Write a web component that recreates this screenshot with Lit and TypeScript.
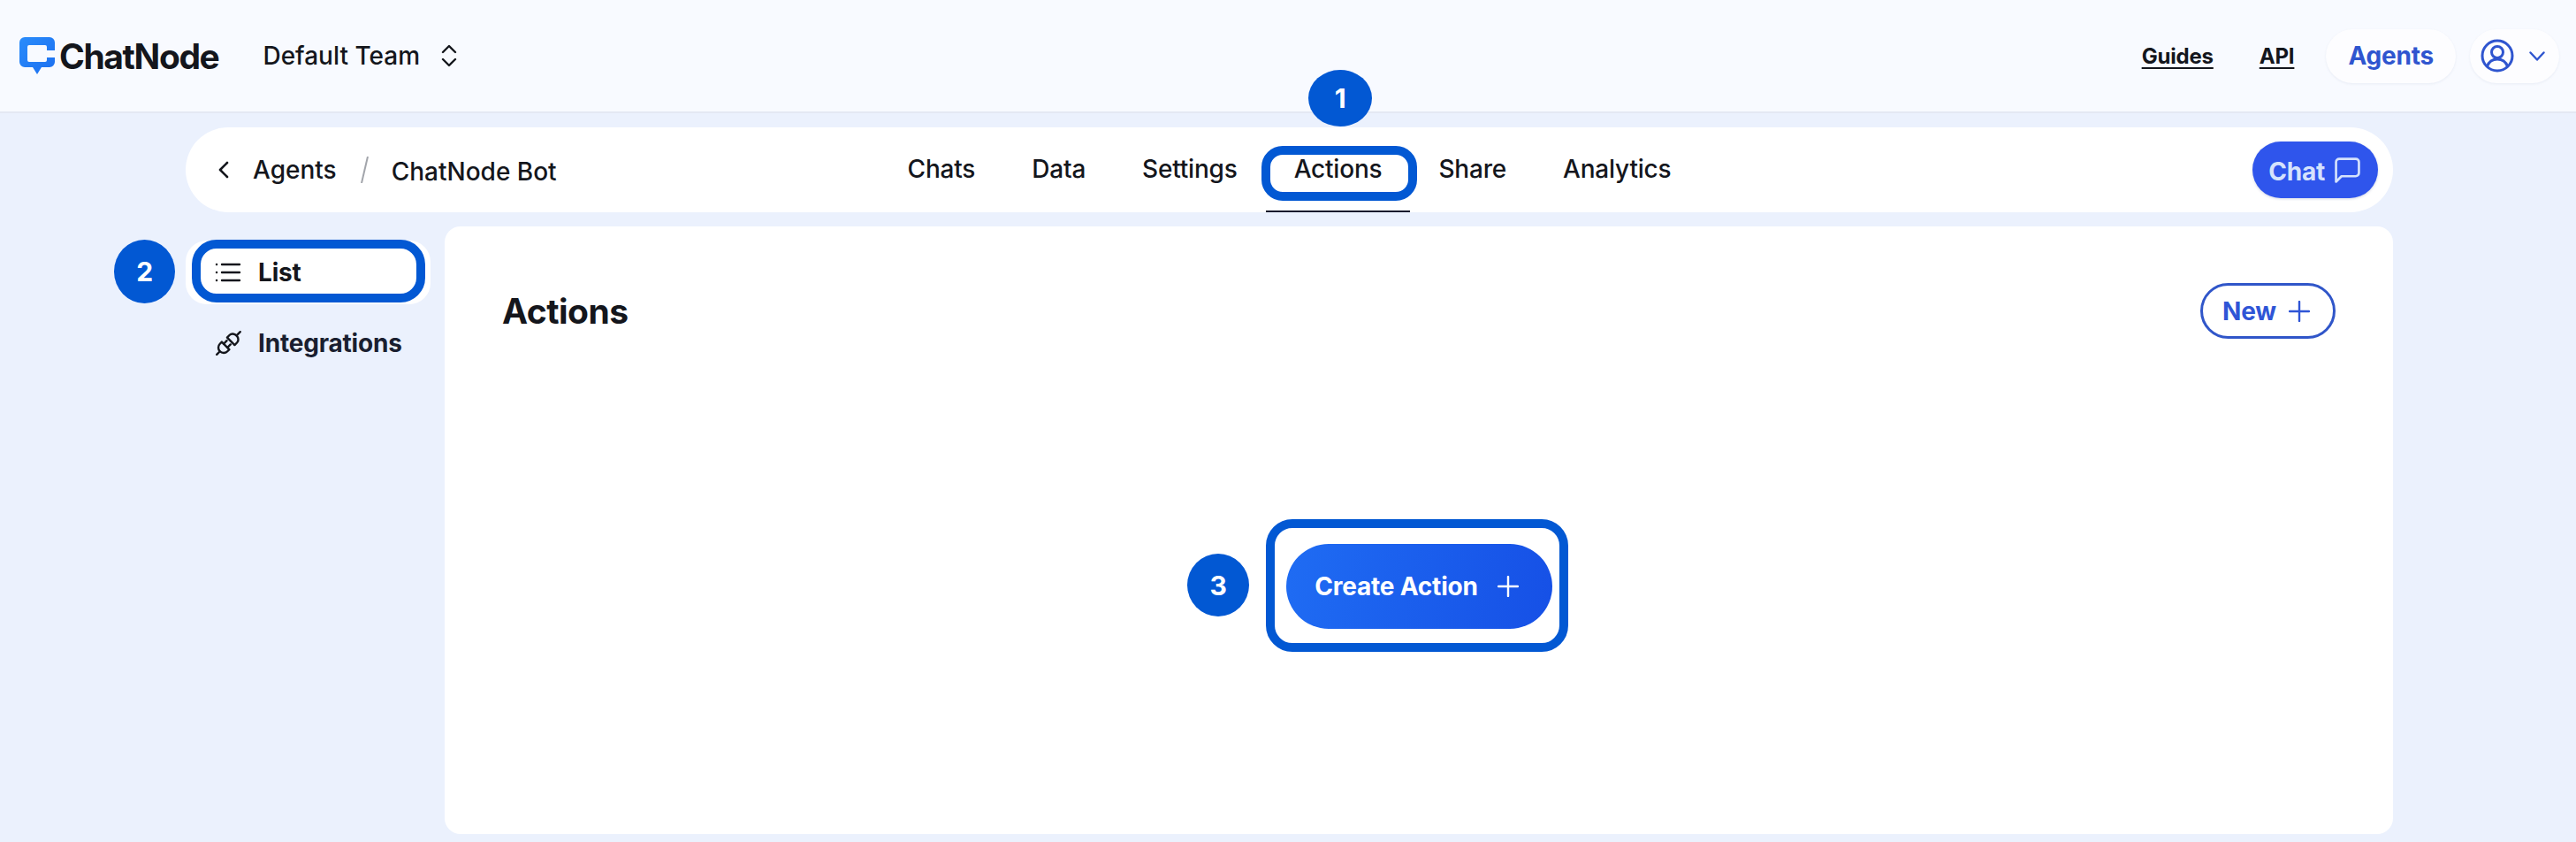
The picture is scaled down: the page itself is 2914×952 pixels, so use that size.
import { LitElement, html, css, svg } from "lit";
import { customElement } from "lit/decorators.js";

const TABS = ["Chats", "Data", "Settings", "Actions", "Share", "Analytics"];

const plus = (size: number, width: number) => html`
  <svg width=${size} height=${size} viewBox="0 0 24 24" fill="none" stroke="currentColor" stroke-width=${width} stroke-linecap="round">
    <path d="M12 1v22M1 12h22" />
  </svg>
`;

const logo = svg`
  <svg class="logo-mark" width="40" height="43" viewBox="0 0 40 43">
    <defs>
      <linearGradient id="lg" x1="0" y1="0" x2="1" y2="1">
        <stop offset="0" stop-color="#2a8cfb" />
        <stop offset="1" stop-color="#1c6ff0" />
      </linearGradient>
    </defs>
    <path fill="url(#lg)" d="M6 0h28a6 6 0 0 1 6 6v22a6 6 0 0 1-6 6h-9l-5 8-5-8H6a6 6 0 0 1-6-6V6a6 6 0 0 1 6-6z" />
    <path fill="#f8faff" d="M11 9h18a2 2 0 0 1 2 2v4h9v8h-9v3a2 2 0 0 1-2 2H11a2 2 0 0 1-2-2V11a2 2 0 0 1 2-2z" />
  </svg>
`;

@customElement("app-root")
export class AppRoot extends LitElement {
  static styles = css`
    :host {
      display: block;
      position: relative;
      height: 952px;
      overflow: hidden;
      background: #ebf1fd;
      color: #14161c;
      font-family: Inter, "Liberation Sans", sans-serif;
      font-size: 28px;
      font-weight: 550;
      letter-spacing: -0.2px;
    }

    svg {
      display: block;
      flex: none;
    }

    /* top header */
    .header {
      height: 126px;
      display: flex;
      align-items: center;
      padding: 0 19px 0 22px;
      background: #f8faff;
      border-bottom: 2px solid #e4e8f3;
    }
    .brand {
      display: flex;
      align-items: center;
      gap: 5px;
      font-size: 39px;
      font-weight: 650;
      letter-spacing: -1.4px;
    }
    .team {
      display: flex;
      align-items: center;
      gap: 24px;
      margin-left: 50px;
      letter-spacing: 0;
    }
    .header-right {
      margin-left: auto;
      display: flex;
      align-items: center;
    }
    .link {
      font-size: 24px;
      font-weight: 650;
      text-decoration: underline;
      text-underline-offset: 4px;
      text-decoration-thickness: 2px;
    }
    .link + .link {
      margin-left: 52px;
    }
    .pill {
      height: 61px;
      display: flex;
      align-items: center;
      background: #fdfdff;
      border-radius: 31px;
      box-shadow: 0 1px 3px rgba(30, 50, 120, 0.07);
      color: #2f55cf;
    }
    .pill-agents {
      margin-left: 36px;
      padding: 0 25px;
      font-weight: 650;
    }
    .pill-user {
      margin-left: 16px;
      padding: 0 16px 0 12px;
      gap: 17px;
    }

    /* agent nav bar */
    .nav {
      height: 96px;
      margin: 16px 207px 0 210px;
      display: grid;
      grid-template-columns: 1fr auto 1fr;
      align-items: center;
      background: #fff;
      border-radius: 48px;
    }
    .crumbs {
      display: flex;
      align-items: center;
      padding-left: 37px;
      letter-spacing: 0;
    }
    .crumb-back {
      margin-right: 27px;
    }
    .slash {
      margin: 0 26px 0 27px;
    }
    .crumb-bot {
      padding-top: 3px;
    }
    .tabs {
      display: flex;
      height: 96px;
    }
    .tab {
      display: flex;
      align-items: center;
      padding: 0 32px;
      box-sizing: border-box;
      border-bottom: 2px solid transparent;
    }
    .tab.active {
      border-bottom-color: #171a2c;
    }
    .chat {
      justify-self: end;
      margin-right: 17px;
      height: 64px;
      display: flex;
      align-items: center;
      gap: 11px;
      padding: 0 20px 0 18px;
      border-radius: 32px;
      background: #2f55ec;
      color: #d5e2fc;
      font-weight: 650;
      box-shadow: 0 1px 3px rgba(30, 50, 120, 0.2);
    }
    .chat span {
      padding-top: 3px;
    }

    /* sidebar and card */
    .body {
      display: flex;
      margin: 16px 207px 0 210px;
    }
    .side {
      width: 293px;
      padding-top: 16px;
      box-sizing: border-box;
    }
    .side-item {
      height: 72px;
      display: flex;
      align-items: center;
      gap: 19px;
      padding-left: 33px;
      border-radius: 24px;
      font-weight: 650;
    }
    .side-item.active {
      width: 277px;
      box-sizing: border-box;
      background: #fff;
    }
    .side-item + .side-item {
      gap: 17px;
      margin-top: 8px;
      color: #1a1f30;
    }
    .card {
      flex: 1;
      height: 687px;
      box-sizing: border-box;
      padding: 64px 65px 0;
      display: flex;
      flex-direction: column;
      background: #fff;
      border-radius: 18px;
    }
    .card-head {
      display: flex;
      align-items: center;
      justify-content: space-between;
    }
    .title {
      margin: 0;
      font-size: 39px;
      font-weight: 700;
      letter-spacing: -0.5px;
    }
    .new {
      width: 153px;
      height: 63px;
      box-sizing: border-box;
      display: flex;
      align-items: center;
      justify-content: center;
      gap: 14px;
      padding-right: 4px;
      border: 3px solid #3056c9;
      border-radius: 32px;
      color: #2f55d6;
      font-weight: 650;
    }
    .card-center {
      display: flex;
      justify-content: center;
      padding-top: 232px;
    }
    .create {
      width: 301px;
      height: 96px;
      box-sizing: border-box;
      display: flex;
      align-items: center;
      justify-content: center;
      gap: 22px;
      padding-right: 5px;
      border-radius: 48px;
      background: linear-gradient(100deg, #1f6cf3, #1650e6);
      color: #fff;
      font-size: 28px;
      font-weight: 650;
    }

    /* tutorial annotations drawn over the app */
    .ring {
      position: absolute;
      box-sizing: border-box;
      border: 10px solid #0258d3;
    }
    .ring-tab {
      left: 1427px;
      top: 165px;
      width: 176px;
      height: 62px;
      border-radius: 24px;
    }
    .ring-list {
      left: 217px;
      top: 271px;
      width: 264px;
      height: 71px;
      border-radius: 28px;
    }
    .ring-create {
      left: 1432px;
      top: 587px;
      width: 342px;
      height: 150px;
      border-radius: 30px;
    }
    .badge {
      position: absolute;
      display: flex;
      align-items: center;
      justify-content: center;
      border-radius: 50%;
      background: #0258d3;
      color: #fff;
      font-size: 30px;
      font-weight: 650;
    }
    .badge-1 {
      left: 1480px;
      top: 79px;
      width: 72px;
      height: 64px;
    }
    .badge-2 {
      left: 129px;
      top: 271px;
      width: 69px;
      height: 72px;
    }
    .badge-3 {
      left: 1343px;
      top: 626px;
      width: 70px;
      height: 71px;
    }
  `;

  render() {
    return html`
      <header class="header">
        <div class="brand">${logo}<span>ChatNode</span></div>
        <div class="team">
          <span>Default Team</span>
          <svg width="18" height="26" viewBox="0 0 18 26" fill="none" stroke="#14161c" stroke-width="2.4" stroke-linecap="round" stroke-linejoin="round">
            <path d="M2 9l7-7 7 7M2 17l7 7 7-7" />
          </svg>
        </div>
        <div class="header-right">
          <span class="link">Guides</span>
          <span class="link">API</span>
          <div class="pill pill-agents">Agents</div>
          <div class="pill pill-user">
            <svg width="38" height="38" viewBox="0 0 38 38" fill="none" stroke="currentColor" stroke-width="3">
              <circle cx="19" cy="19" r="17" />
              <circle cx="19" cy="15" r="6.5" />
              <path d="M7.5 31c2-5.5 6-8 11.500-8s9.500 2.500 11.500 8" />
            </svg>
            <svg width="18" height="11" viewBox="0 0 18 11" fill="none" stroke="currentColor" stroke-width="2.400" stroke-linecap="round" stroke-linejoin="round">
              <path d="M1.500 1.500l7.500 8 7.500-8" />
            </svg>
          </div>
        </div>
      </header>

      <nav class="nav">
        <div class="crumbs">
          <svg class="crumb-back" width="12" height="20" viewBox="0 0 12 20" fill="none" stroke="#14161c" stroke-width="2.600" stroke-linecap="round" stroke-linejoin="round">
            <path d="M10 2l-8 8 8 8" />
          </svg>
          <span>Agents</span>
          <svg class="slash" width="9" height="30" viewBox="0 0 9 30" fill="none" stroke="#a2a5ab" stroke-width="2">
            <path d="M8 0L1 30" />
          </svg>
          <span class="crumb-bot">ChatNode Bot</span>
        </div>
        <div class="tabs">
          ${TABS.map((t) => html`<div class="tab ${t === "Actions" ? "active" : ""}">${t}</div>`)}
        </div>
        <div class="chat">
          <span>Chat</span>
          <svg width="29" height="29" viewBox="0 0 28 28" fill="none" stroke="currentColor" stroke-width="2.600" stroke-linejoin="round">
            <path d="M1.500 26.500V5a3.500 3.500 0 0 1 3.500-3.500h18A3.500 3.500 0 0 1 26.500 5v12a3.500 3.500 0 0 1-3.500 3.500H7.500z" />
          </svg>
        </div>
      </nav>

      <div class="body">
        <aside class="side">
          <div class="side-item active">
            <svg width="30" height="22" viewBox="0 0 30 22" fill="none" stroke="#14161c" stroke-width="2.400" stroke-linecap="round">
              <path d="M8 2h20M8 11h20M8 20h20" />
              <path d="M2 2h.1M2 11h.1M2 20h.1" />
            </svg>
            <span>List</span>
          </div>
          <div class="side-item">
            <svg width="32" height="32" viewBox="0 0 32 32" fill="none" stroke="#14161c" stroke-width="2.400" stroke-linecap="round" stroke-linejoin="round">
              <g transform="translate(21 11) rotate(45)">
                <path d="M-6 4H6V0A6 5 0 0 0-6 0Z" />
                <path d="M0-5V-11" />
              </g>
              <g transform="translate(10 21) rotate(45)">
                <path d="M-6-3H6V0A6 6 0 0 1-6 0Z" />
                <path d="M-3-3V-8M3-3V-8M0 6V11" />
              </g>
            </svg>
            <span>Integrations</span>
          </div>
        </aside>
        <main class="card">
          <div class="card-head">
            <h1 class="title">Actions</h1>
            <div class="new"><span>New</span>${plus(24, 2.4)}</div>
          </div>
          <div class="card-center">
            <div class="create"><span>Create Action</span>${plus(24, 2.4)}</div>
          </div>
        </main>
      </div>

      <div class="ring ring-tab"></div>
      <div class="ring ring-list"></div>
      <div class="ring ring-create"></div>
      <div class="badge badge-1">1</div>
      <div class="badge badge-2">2</div>
      <div class="badge badge-3">3</div>
    `;
  }
}
